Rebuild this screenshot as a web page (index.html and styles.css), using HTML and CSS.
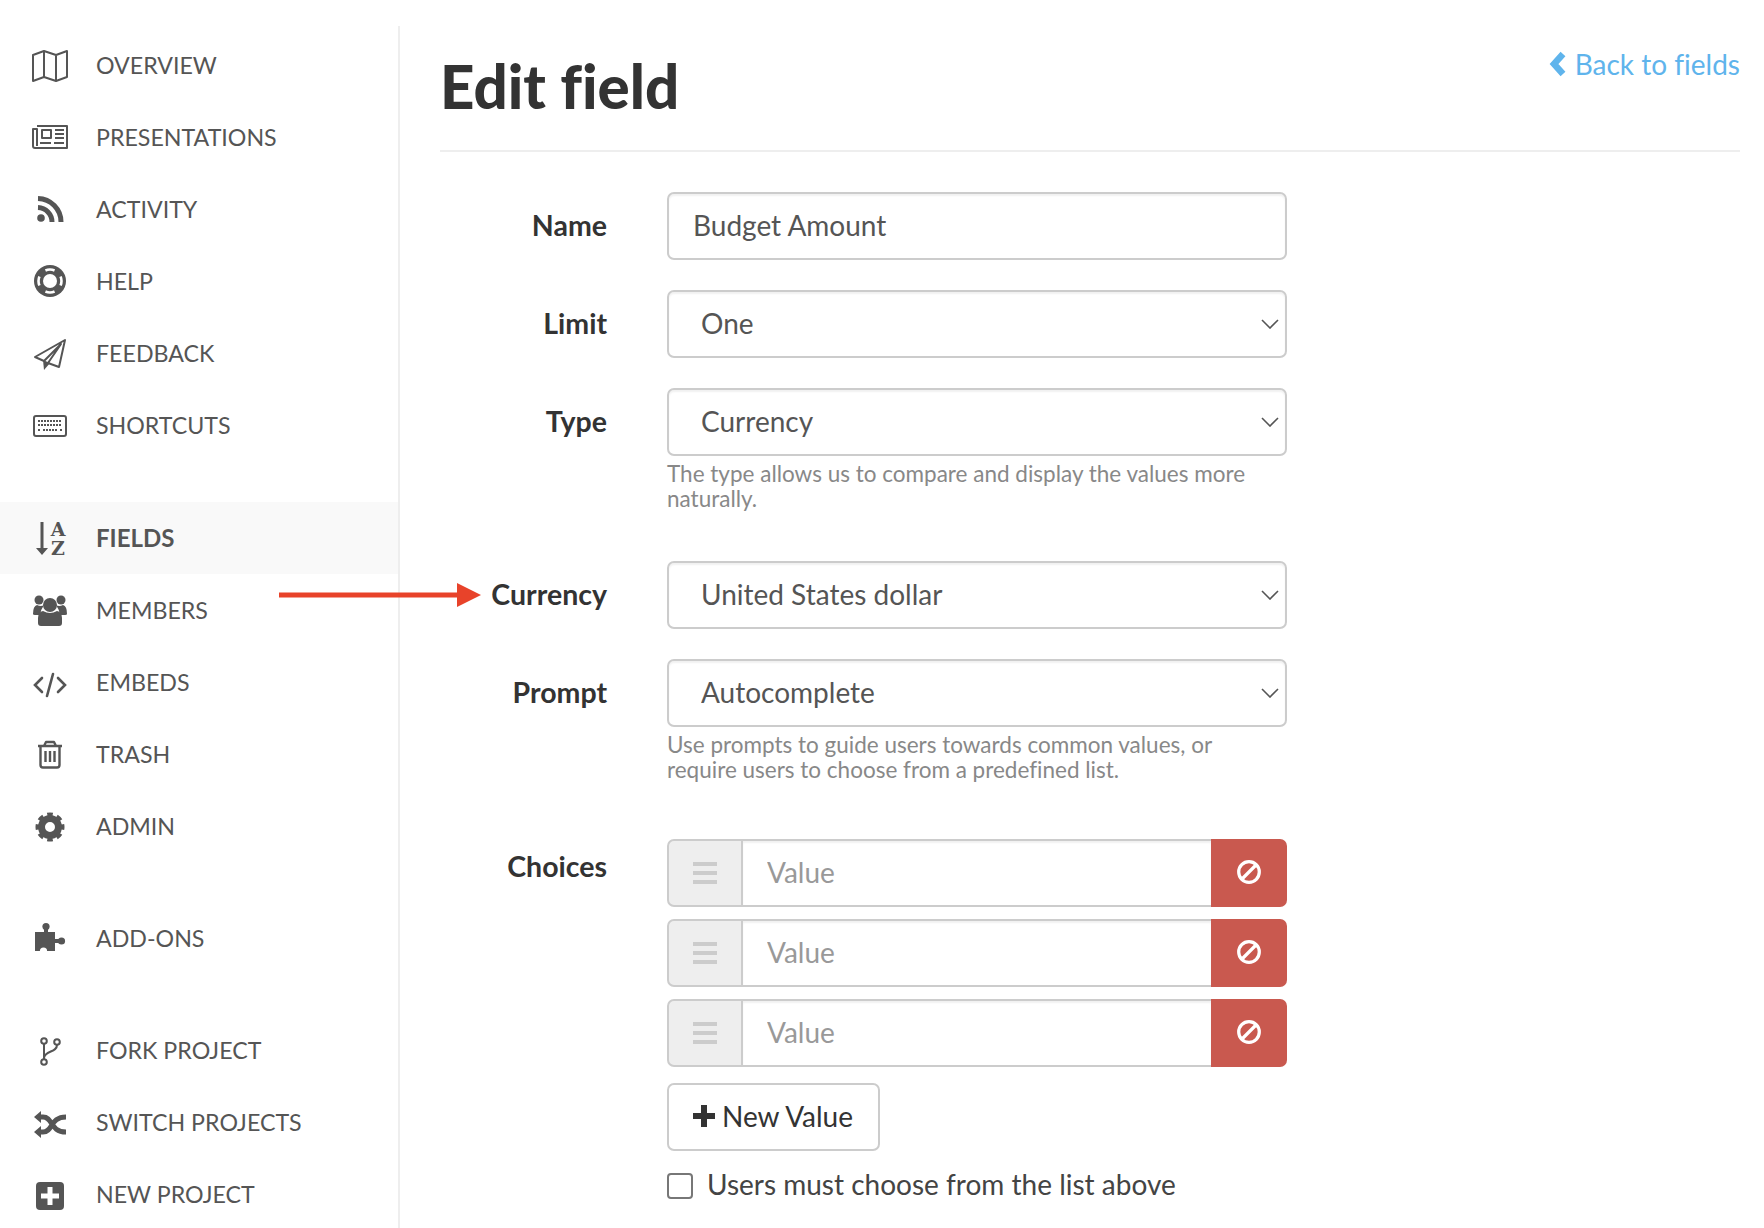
FILE: index.html
```html
<!DOCTYPE html>
<html>

<head>
  <title>Edit field</title>
  <link rel="stylesheet" href="styles.css">
</head>

<body>
  <div class="page">
    <nav class="sidebar">
      <ul class="nav-group first">
        <li><a class="nav-item" href="#">
            <svg class="nav-icon" viewBox="0 0 40 40"><path class="line" d="M3 10L14 6L26 10L37 6V32L26 36L14 32L3 36Z M14 6V32 M26 10V36"/></svg>
            OVERVIEW</a></li>
        <li><a class="nav-item" href="#">
            <svg class="nav-icon" viewBox="0 0 40 40"><path class="line" d="M7 9H37V31H5Q3 31 3 29V12H7V29"/><path class="line" d="M12 13H21V21H12Z M25 13H34 M25 17H34 M25 21H34 M10 26H21 M24 26H34"/></svg>
            PRESENTATIONS</a></li>
        <li><a class="nav-item" href="#">
            <svg class="nav-icon" viewBox="0 0 40 40"><circle class="fill" cx="11" cy="29" r="3.8"/><path class="line thick" d="M8 18.5A14.5 14.5 0 0 1 22 33 M8 9.5A23.5 23.5 0 0 1 31 33"/></svg>
            ACTIVITY</a></li>
        <li><a class="nav-item" href="#">
            <svg class="nav-icon" viewBox="0 0 40 40"><circle class="fill" cx="20" cy="20" r="16"/><circle class="knock" cx="20" cy="20" r="7"/><circle class="ring-gaps" cx="20" cy="20" r="11.5" pathLength="100"/></svg>
            HELP</a></li>
        <li><a class="nav-item" href="#">
            <svg class="nav-icon" viewBox="0 0 40 40"><path class="line" d="M35 7L5 24L14 28L31 11L18 30L29 34Z"/><path class="fill" d="M13 27L14 37L20 30Z"/></svg>
            FEEDBACK</a></li>
        <li><a class="nav-item" href="#">
            <svg class="nav-icon" viewBox="0 0 40 40"><rect class="line" x="4" y="11" width="32" height="20" rx="2"/><path class="keys" d="M8 16H32 M8 20H32 M8 25H10 M13 25H27 M30 25H32"/></svg>
            SHORTCUTS</a></li>
      </ul>
      <ul class="nav-group">
        <li><a class="nav-item active" href="#">
            <svg class="nav-icon" viewBox="0 0 40 40"><path class="fill" d="M10.5 4H13.5V30H18L12 37L6 30H10.5Z"/><text class="az" x="28" y="18">A</text><text class="az" x="28" y="37">Z</text></svg>
            FIELDS</a></li>
        <li><a class="nav-item" href="#">
            <svg class="nav-icon" viewBox="0 0 40 40"><circle class="fill" cx="9" cy="10" r="4.5"/><circle class="fill" cx="31" cy="10" r="4.5"/><path class="fill" d="M3 24Q3 16 7 15Q11 17 14 15Q11 19 10 25H5Q3 25 3 24Z M37 24Q37 16 33 15Q29 17 26 15Q29 19 30 25H35Q37 25 37 24Z"/><circle class="fill" cx="20" cy="15" r="7"/><path class="fill" d="M8 33V28Q8 22 13 21Q20 25 27 21Q32 22 32 28V33Q32 36 29 36H11Q8 36 8 33Z"/></svg>
            MEMBERS</a></li>
        <li><a class="nav-item" href="#">
            <svg class="nav-icon" viewBox="0 0 40 40"><path class="line round" d="M12 16L5 23L12 30 M28 16L35 23L28 30 M23 12L17 34"/></svg>
            EMBEDS</a></li>
        <li><a class="nav-item" href="#">
            <svg class="nav-icon" viewBox="0 0 40 40"><path class="line heavy" d="M8 12H32 M14 12L16 8H24L26 12 M10.5 12V31Q10.5 33.5 13 33.5H27Q29.5 33.5 29.5 31V12 M15.5 17V28 M20 17V28 M24.5 17V28"/></svg>
            TRASH</a></li>
        <li><a class="nav-item" href="#">
            <svg class="nav-icon" viewBox="0 0 40 40"><circle class="gear-body" cx="20" cy="21" r="8.5"/><circle class="gear-teeth" cx="20" cy="21" r="12" pathLength="100"/></svg>
            ADMIN</a></li>
      </ul>
      <ul class="nav-group">
        <li><a class="nav-item" href="#">
            <svg class="nav-icon" viewBox="0 0 40 40"><path class="fill" d="M5 14H14V10H18V14H25V21H29V25H25V33H5Z"/><circle class="fill" cx="16" cy="8.5" r="3.6"/><circle class="fill" cx="31.5" cy="23" r="3.6"/><circle class="knock" cx="13.5" cy="33" r="3.6"/></svg>
            ADD-ONS</a></li>
      </ul>
      <ul class="nav-group">
        <li><a class="nav-item" href="#">
            <svg class="nav-icon" viewBox="0 0 40 40"><path class="line" d="M14 14V29 M27 15C27 23 15 20 14 28"/><circle class="line" cx="14" cy="11" r="2.8"/><circle class="line" cx="14" cy="32" r="2.8"/><circle class="line" cx="27" cy="12" r="2.8"/></svg>
            FORK PROJECT</a></li>
        <li><a class="nav-item" href="#">
            <svg class="nav-icon" viewBox="0 0 40 40"><path class="line thick" d="M9 15H13C23 15 20 30 36 30 M9 30H13C23 30 20 15 36 15"/><path class="fill" d="M4 15L11 9V21Z M4 30L11 24V36Z"/></svg>
            SWITCH PROJECTS</a></li>
        <li><a class="nav-item" href="#">
            <svg class="nav-icon" viewBox="0 0 40 40"><rect class="fill" x="6" y="8" width="28" height="28" rx="4"/><path class="knock" d="M17.5 13H22.5V19.5H29V24.5H22.5V31H17.5V24.5H11V19.5H17.5Z"/></svg>
            NEW PROJECT</a></li>
      </ul>
    </nav>

    <main class="content">
      <header class="page-head">
        <h1>Edit field</h1>
        <a class="back-link" href="#">
          <svg class="back-icon" viewBox="0 0 18 26"><path d="M14 3L5 13L14 23"/></svg>
          Back to fields</a>
      </header>

      <form class="field-form">
        <label class="field-label" for="name">Name</label>
        <div class="field-body">
          <input class="text-input" type="text" id="name" value="Budget Amount" />
        </div>

        <label class="field-label" for="limit">Limit</label>
        <div class="field-body">
          <div class="select-wrap">
            <select id="limit">
              <option>One</option>
            </select>
            <svg class="select-arrow" viewBox="0 0 18 10"><path d="M1 1L9 9L17 1"/></svg>
          </div>
        </div>

        <label class="field-label" for="type">Type</label>
        <div class="field-body">
          <div class="select-wrap">
            <select id="type">
              <option>Currency</option>
            </select>
            <svg class="select-arrow" viewBox="0 0 18 10"><path d="M1 1L9 9L17 1"/></svg>
          </div>
          <p class="help">The type allows us to compare and display the values more naturally.</p>
        </div>

        <label class="field-label" for="currency">Currency</label>
        <div class="field-body">
          <div class="select-wrap">
            <select id="currency">
              <option>United States dollar</option>
            </select>
            <svg class="select-arrow" viewBox="0 0 18 10"><path d="M1 1L9 9L17 1"/></svg>
          </div>
        </div>

        <label class="field-label" for="prompt">Prompt</label>
        <div class="field-body">
          <div class="select-wrap">
            <select id="prompt">
              <option>Autocomplete</option>
            </select>
            <svg class="select-arrow" viewBox="0 0 18 10"><path d="M1 1L9 9L17 1"/></svg>
          </div>
          <p class="help">Use prompts to guide users towards common values, or require users to choose from a predefined list.</p>
        </div>

        <label class="field-label choices-label">Choices</label>
        <div class="field-body choices">
          <div class="choice">
            <span class="choice-handle"><i></i><i></i><i></i></span>
            <input class="choice-input" type="text" placeholder="Value" />
            <button class="choice-remove" type="button">
              <svg viewBox="0 0 24 24"><circle cx="12" cy="12" r="9.5"/><path d="M6 18L18 6"/></svg>
            </button>
          </div>
          <div class="choice">
            <span class="choice-handle"><i></i><i></i><i></i></span>
            <input class="choice-input" type="text" placeholder="Value" />
            <button class="choice-remove" type="button">
              <svg viewBox="0 0 24 24"><circle cx="12" cy="12" r="9.5"/><path d="M6 18L18 6"/></svg>
            </button>
          </div>
          <div class="choice">
            <span class="choice-handle"><i></i><i></i><i></i></span>
            <input class="choice-input" type="text" placeholder="Value" />
            <button class="choice-remove" type="button">
              <svg viewBox="0 0 24 24"><circle cx="12" cy="12" r="9.5"/><path d="M6 18L18 6"/></svg>
            </button>
          </div>
          <button class="new-value" type="button">
            <svg viewBox="0 0 22 22"><path d="M8 0H14V8H22V14H14V22H8V14H0V8H8Z"/></svg>
            New Value</button>
          <label class="check-row">
            <input class="check-box" type="checkbox" />
            <span class="check-text">Users must choose from the list above</span>
          </label>
        </div>
      </form>
    </main>

    <svg class="callout" viewBox="0 0 202 24"><path d="M0 9.5H178V0L202 12L178 24V14.5H0Z"/></svg>
  </div>
</body>

</html>
```

FILE: styles.css
```css
html,
body {
  margin: 0;
  height: 100%;
}

body {
  font-family: "Lato", sans-serif;
  font-variant-ligatures: none;
  color: #333;
  background: #fff;
}

.page {
  position: relative;
  display: flex;
  height: 1228px;
  overflow: hidden;
}

/* Sidebar */
.sidebar {
  flex: none;
  box-sizing: border-box;
  width: 400px;
  margin-top: 26px;
  padding-top: 3px;
  border-right: 2px solid #eee;
}

.nav-group {
  list-style: none;
  margin: 0 0 40px;
  padding: 0;
}

.nav-group.first {
  margin-bottom: 41px;
}

.nav-item {
  display: flex;
  align-items: center;
  gap: 26px;
  box-sizing: border-box;
  height: 72px;
  padding-left: 30px;
  font-size: 23.2px;
  color: #555;
  text-decoration: none;
}

.nav-group + .nav-group .nav-item {
  padding-bottom: 1px;
}

.nav-item.active {
  background: #f9f9f9;
  font-size: 24px;
  font-weight: 700;
}

.nav-icon {
  flex: none;
  width: 40px;
  height: 40px;
}

.line {
  fill: none;
  stroke: #555;
  stroke-width: 2;
  stroke-linejoin: round;
}

.line.heavy {
  stroke-width: 2.4;
}

.line.thick {
  stroke-width: 5;
  stroke-linejoin: miter;
}

.line.round {
  stroke-width: 2.6;
  stroke-linecap: round;
  stroke-linejoin: miter;
}

.fill {
  fill: #555;
}

.knock {
  fill: #fff;
}

.keys {
  fill: none;
  stroke: #555;
  stroke-width: 2;
  stroke-dasharray: 2 1;
}

.ring-gaps {
  fill: none;
  stroke: #fff;
  stroke-width: 2.6;
  stroke-dasharray: 13 12;
  stroke-dashoffset: 6.5;
}

.gear-body {
  fill: none;
  stroke: #555;
  stroke-width: 7;
}

.gear-teeth {
  fill: none;
  stroke: #555;
  stroke-width: 5;
  stroke-dasharray: 7 5.5;
  stroke-dashoffset: 3.5;
}

.az {
  font-family: "DejaVu Serif", serif;
  font-size: 19px;
  font-weight: 700;
  fill: #555;
  text-anchor: middle;
}

/* Main column */
.content {
  flex: 1;
  min-width: 0;
  padding: 0 24px 0 40px;
}

.page-head {
  display: flex;
  justify-content: space-between;
  height: 150px;
  border-bottom: 2px solid #eee;
}

h1 {
  margin: 48px 0 0;
  font-size: 60px;
  line-height: 76px;
  font-weight: 900;
  color: #333;
}

.back-link {
  display: flex;
  align-items: center;
  gap: 8px;
  height: 34px;
  margin-top: 47px;
  font-size: 28px;
  color: #5fb4ec;
  text-decoration: none;
}

.back-icon {
  width: 18px;
  height: 26px;
}

.back-icon path {
  fill: none;
  stroke: #5fb4ec;
  stroke-width: 6.5;
}

/* Form */
.field-form {
  display: grid;
  grid-template-columns: 167px 620px;
  column-gap: 60px;
  align-items: start;
  margin-top: 40px;
}

.field-label {
  font-size: 28.5px;
  font-weight: 700;
  line-height: 66px;
  text-align: right;
}

.field-body {
  margin-bottom: 30px;
}

.text-input,
.select-wrap select {
  display: block;
  box-sizing: border-box;
  width: 100%;
  height: 68px;
  padding: 0 24px 2px;
  border: 2px solid #ccc;
  border-radius: 7px;
  box-shadow: inset 0 2px 2px rgba(0, 0, 0, 0.06);
  font-family: "Lato", sans-serif;
  font-size: 28px;
  color: #555;
  background: #fff;
}

.select-wrap {
  position: relative;
}

.select-wrap select {
  padding-left: 32px;
  appearance: none;
  -webkit-appearance: none;
}

.select-arrow {
  position: absolute;
  top: 29px;
  right: 8px;
  width: 18px;
  height: 10px;
  pointer-events: none;
}

.select-arrow path {
  fill: none;
  stroke: #555;
  stroke-width: 1.6;
}

.help {
  margin: 5px 0 20px;
  font-size: 22.5px;
  line-height: 25px;
  color: #888;
}

.choices-label {
  margin-top: 1px;
}

.choices {
  margin-top: 7px;
  margin-bottom: 0;
}

.choice {
  display: flex;
  height: 68px;
  margin-bottom: 12px;
}

.choice-handle {
  display: flex;
  flex: none;
  flex-direction: column;
  align-items: center;
  justify-content: center;
  gap: 5px;
  box-sizing: border-box;
  width: 76px;
  border: 2px solid #ccc;
  border-radius: 7px 0 0 7px;
  background: #eee;
}

.choice-handle i {
  width: 24px;
  height: 4px;
  background: #ccc;
}

.choice-input {
  flex: 1;
  min-width: 0;
  box-sizing: border-box;
  padding: 0 24px 2px;
  border: solid #ccc;
  border-width: 2px 0;
  box-shadow: inset 0 2px 2px rgba(0, 0, 0, 0.06);
  font-family: "Lato", sans-serif;
  font-size: 28px;
  color: #555;
}

.choice-input::placeholder {
  color: #999;
  opacity: 1;
}

.choice-remove {
  flex: none;
  width: 76px;
  padding: 0;
  border: none;
  border-radius: 0 7px 7px 0;
  background: #c9594f;
}

.choice-remove svg {
  display: block;
  width: 26px;
  height: 26px;
  margin: -3px auto 0;
  fill: none;
  stroke: #fff;
  stroke-width: 3;
}

.new-value {
  display: flex;
  align-items: center;
  gap: 7px;
  box-sizing: border-box;
  width: 213px;
  height: 68px;
  margin-top: 16px;
  padding: 0 24px 2px;
  border: 2px solid #ccc;
  border-radius: 7px;
  font-family: "Lato", sans-serif;
  font-size: 28px;
  color: #333;
  background: #fff;
}

.new-value svg {
  width: 22px;
  height: 22px;
  fill: #333;
}

.check-row {
  display: flex;
  align-items: center;
  gap: 14px;
  height: 26px;
  margin-top: 22px;
  font-size: 28px;
  color: #444;
}

.check-text {
  margin-top: -4px;
}

.check-box {
  flex: none;
  box-sizing: border-box;
  width: 26px;
  height: 26px;
  margin: 0;
  border: 2px solid #777;
  border-radius: 4px;
  background: #fff;
  appearance: none;
  -webkit-appearance: none;
}

/* Red annotation arrow over the page */
.callout {
  position: absolute;
  top: 583px;
  left: 279px;
  width: 202px;
  height: 24px;
  fill: #e8432a;
}
```
